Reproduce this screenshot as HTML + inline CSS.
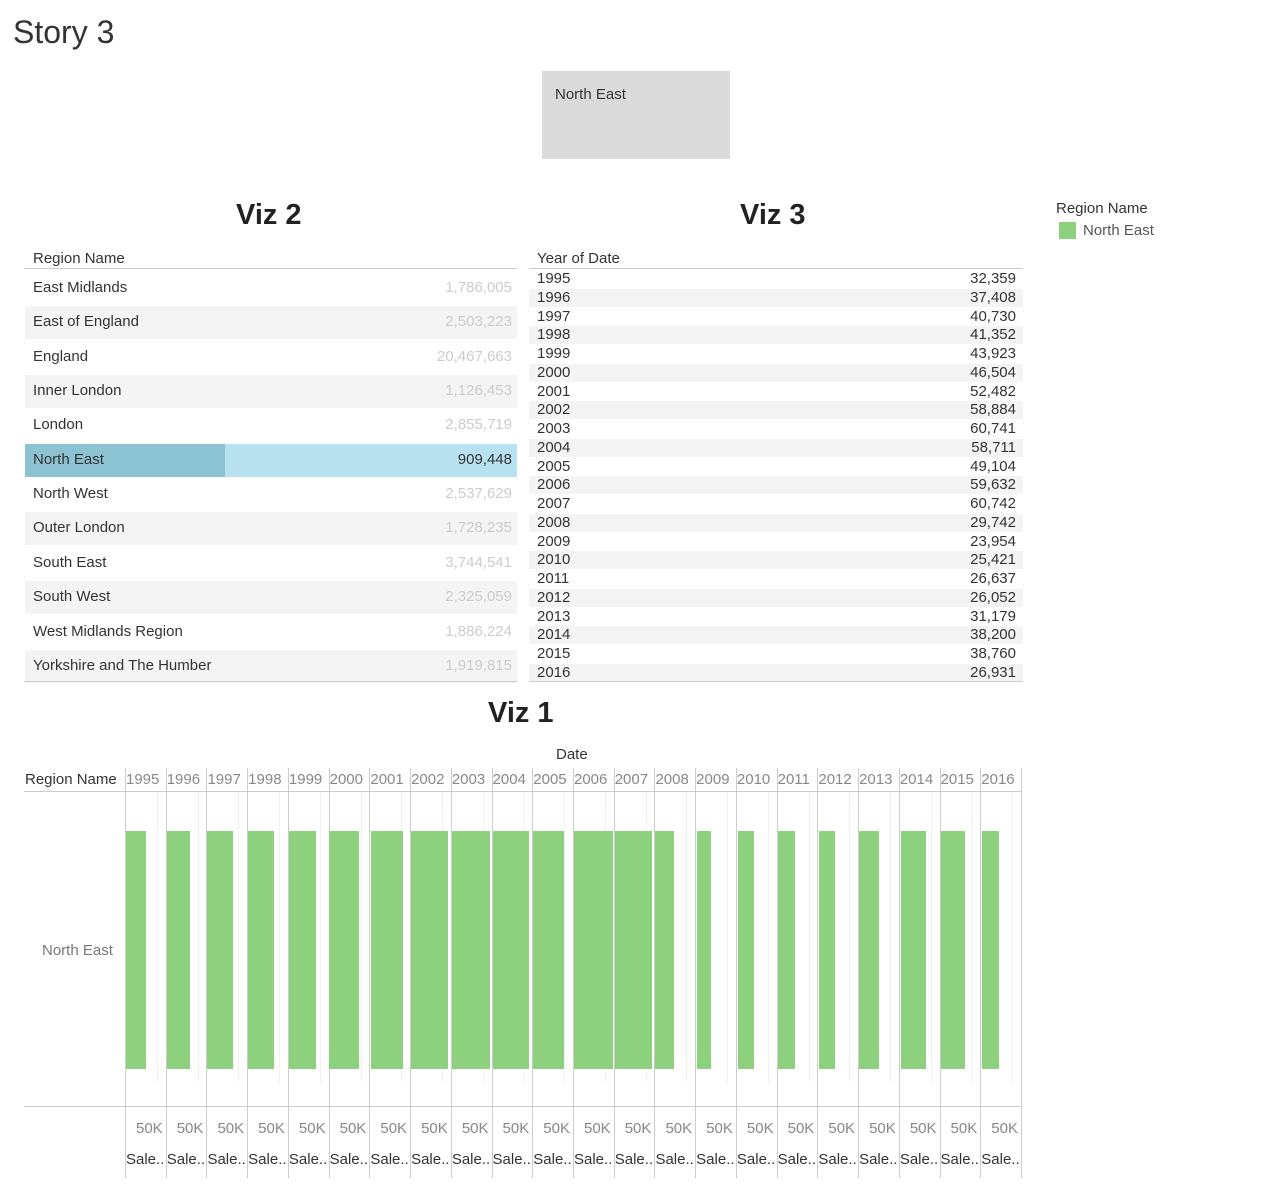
<!DOCTYPE html>
<html><head><meta charset="utf-8"><style>
*{margin:0;padding:0;box-sizing:border-box}
body{width:1269px;height:1204px;background:#fff;font-family:"Liberation Sans","DejaVu Sans",sans-serif;position:relative;overflow:hidden;color:#333}
.a{position:absolute;white-space:nowrap}
</style></head><body>
<div class="a" style="left:13px;top:14px;font-size:32px;color:#333">Story 3</div>
<div class="a" style="left:542px;top:71px;width:188px;height:88px;background:#dadada"></div>
<div class="a" style="left:555px;top:86px;font-size:15px;color:#333">North East</div>
<div class="a" style="left:236px;top:199px;font-size:29px;font-weight:bold;color:#222">Viz 2</div>
<div class="a" style="left:740px;top:199px;font-size:29px;font-weight:bold;color:#222">Viz 3</div>
<div class="a" style="left:488px;top:697px;font-size:29px;font-weight:bold;color:#222">Viz 1</div>
<div class="a" style="left:1056px;top:200px;font-size:15px;color:#333">Region Name</div>
<div class="a" style="left:1059px;top:222px;width:17px;height:17px;background:#8dd17e"></div>
<div class="a" style="left:1083px;top:222px;font-size:15px;color:#555">North East</div>
<div class="a" style="left:33px;top:250px;font-size:15px;color:#333">Region Name</div>
<div class="a" style="left:24px;top:268px;width:493px;height:1px;background:#ccc"></div>
<div class="a" style="left:537px;top:250px;font-size:15px;color:#333">Year of Date</div>
<div class="a" style="left:529px;top:268px;width:494px;height:1px;background:#ccc"></div>
<div id="v1"></div>
<div class="a" style="left:556px;top:746px;font-size:15px;color:#333">Date</div>
<div class="a" style="left:25px;top:771px;font-size:15px;color:#333">Region Name</div>
<div class="a" style="left:42px;top:942px;font-size:15px;color:#777">North East</div>
<div class="a" style="left:24px;top:791px;width:997px;height:1px;background:#ccc"></div>
<div class="a" style="left:24px;top:1106px;width:997px;height:1px;background:#ccc"></div>
<script>
var h='';
var r=[["East Midlands","1,786,005"],["East of England","2,503,223"],["England","20,467,663"],["Inner London","1,126,453"],["London","2,855,719"],["North East","909,448"],["North West","2,537,629"],["Outer London","1,728,235"],["South East","3,744,541"],["South West","2,325,059"],["West Midlands Region","1,886,224"],["Yorkshire and The Humber","1,919,815"]];
r.forEach(function(x,i){var t=269+i*34.35;var hl=i==5;
if(hl){h+='<div class="a" style="left:25px;top:'+(t+3)+'px;width:200px;height:33px;background:#8cc3d3"></div><div class="a" style="left:225px;top:'+(t+3)+'px;width:292px;height:33px;background:#b9e2f0"></div>';}
else if(i%2==1)h+='<div class="a" style="left:25px;top:'+(t+3)+'px;width:492px;height:33px;background:#f4f4f4"></div>';
h+='<div class="a" style="left:33px;top:'+(t+10)+'px;font-size:15px;color:#333">'+x[0]+'</div>';
h+='<div class="a" style="right:757px;top:'+(t+10)+'px;font-size:15px;color:'+(hl?'#333':'#ccc')+'">'+x[1]+'</div>';});
h+='<div class="a" style="left:24px;top:681px;width:493px;height:1px;background:#ccc"></div>';
var v=["32,359","37,408","40,730","41,352","43,923","46,504","52,482","58,884","60,741","58,711","49,104","59,632","60,742","29,742","23,954","25,421","26,637","26,052","31,179","38,200","38,760","26,931"];
v.forEach(function(x,i){var t=270+i*18.75;
if(i%2==1)h+='<div class="a" style="left:529px;top:'+t+'px;width:494px;height:18px;background:#f4f4f4"></div>';
h+='<div class="a" style="left:537px;top:'+t+'px;font-size:15px;color:#333">'+(1995+i)+'</div>';
h+='<div class="a" style="right:253px;top:'+t+'px;font-size:15px;color:#333">'+x+'</div>';});
h+='<div class="a" style="left:529px;top:681px;width:494px;height:1px;background:#ccc"></div>';
var b=[[126,146],[167,190],[207,233],[248,274],[289,316],[329,359],[371,403],[411,448],[452,490],[493,529],[533,564],[574,613],[615,652],[655,674],[697,711],[738,754],[778,795],[819,835],[859,879],[901,926],[941,965],[982,999]];
var w=(1021-125)/22;
for(var i=0;i<22;i++){var x=125+i*w;
h+='<div class="a" style="left:'+x+'px;top:768px;width:1px;height:410px;background:#ccc"></div>';
h+='<div class="a" style="left:'+(x+32)+'px;top:792px;width:1px;height:290px;background:#f0f0f0"></div>';
h+='<div class="a" style="left:'+(x+1)+'px;top:771px;font-size:15px;color:#888">'+(1995+i)+'</div>';
h+='<div class="a" style="left:'+b[i][0]+'px;top:831px;width:'+(b[i][1]-b[i][0])+'px;height:238px;background:#8dd17e"></div>';
h+='<div class="a" style="left:'+(x+11)+'px;top:1120px;font-size:15px;color:#888">50K</div>';
h+='<div class="a" style="left:'+(x+1)+'px;top:1151px;font-size:15px;color:#333">Sale..</div>';}
h+='<div class="a" style="left:1021px;top:768px;width:1px;height:410px;background:#ccc"></div>';
document.getElementById('v1').innerHTML=h;
</script>
</body></html>
